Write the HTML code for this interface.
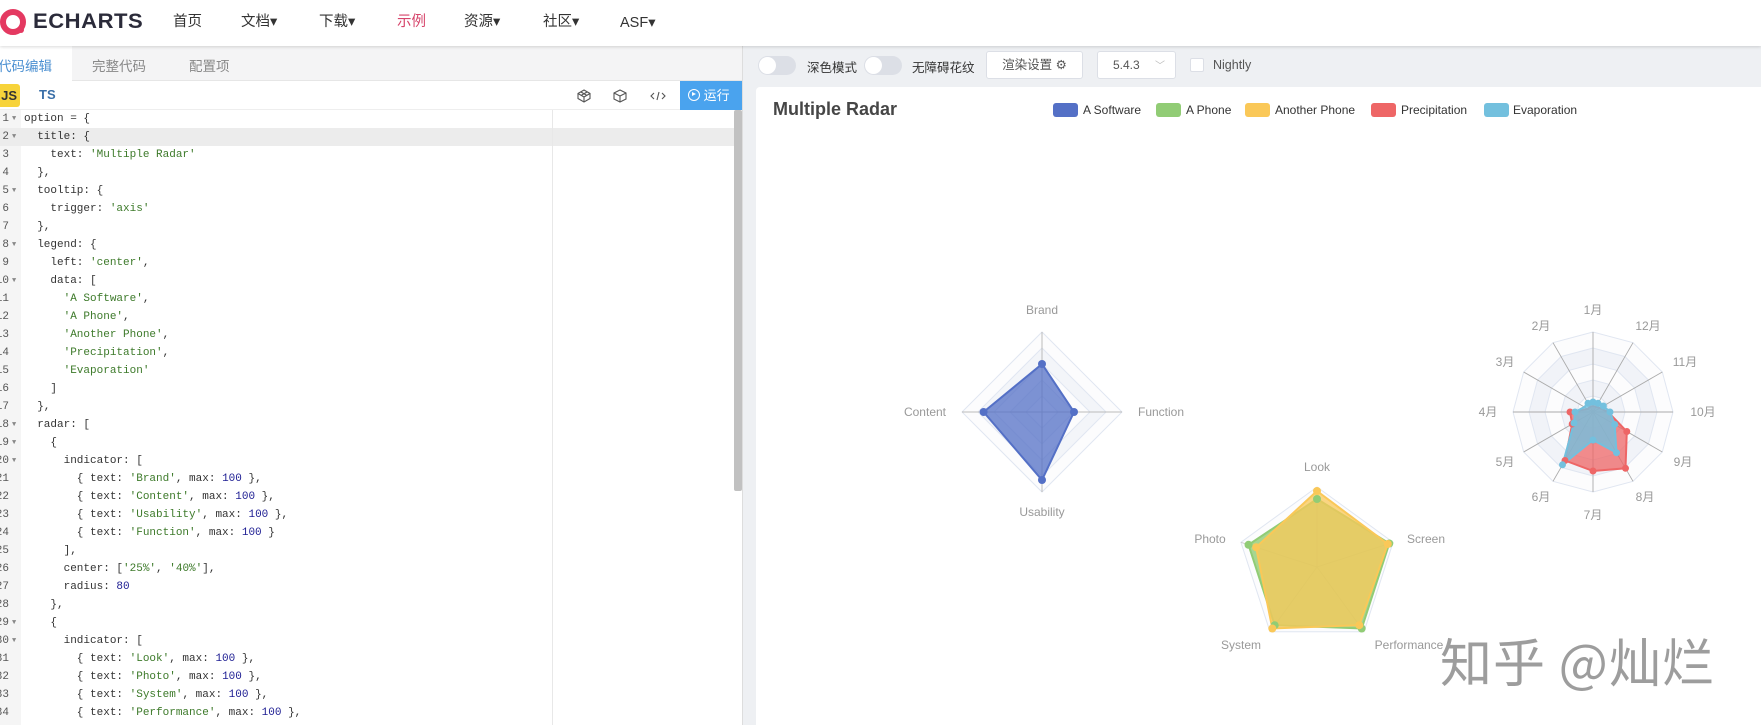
<!DOCTYPE html>
<html><head><meta charset="utf-8">
<style>
*{margin:0;padding:0;box-sizing:border-box}
body{width:1761px;height:725px;overflow:hidden;position:relative;background:#fff;font-family:"Liberation Sans","Noto Sans CJK SC",sans-serif;color:#333}
.a{position:absolute;white-space:nowrap}
.nav{font-size:14.5px;color:#333;top:12px;line-height:20px}
.code{font-family:"Liberation Mono",monospace;font-size:11px;color:#333}
.ln{position:absolute;left:0;width:24px;height:18px;line-height:18px}
.cl{position:absolute;left:24px;height:18px;line-height:18px;white-space:pre}
.s{color:#3d7a2a}.n{color:#1c1c92}
.num{position:absolute;right:15px;color:#555;font-size:11px}
.fold{position:absolute;left:12px;top:0;font-size:7px;color:#888}
.tg{position:absolute;width:38px;height:19px;border-radius:10px;background:#dcdfe6}
.tg::after{content:"";position:absolute;left:1px;top:1px;width:17px;height:17px;border-radius:50%;background:#fff}
</style></head><body>
<!-- nav -->
<div class="a" style="left:0;top:0;width:1761px;height:46px;background:#fff;box-shadow:0 1px 3px rgba(0,0,0,.15);z-index:2">
 <svg class="a" style="left:0;top:8px" width="30" height="30" viewBox="0 0 30 30"><circle cx="13" cy="14" r="10" fill="none" stroke="#e43961" stroke-width="6"/><circle cx="21" cy="22" r="3" fill="#e43961"/></svg>
 <div class="a" style="left:33px;top:10px;font-size:21px;font-weight:bold;color:#2b2b3a;letter-spacing:0.5px;transform:scaleX(1.05);transform-origin:left">ECHARTS</div>
 <div class="a nav" style="left:173px">首页</div>
 <div class="a nav" style="left:241px">文档▾</div>
 <div class="a nav" style="left:319px">下载▾</div>
 <div class="a nav" style="left:397px;color:#d6456b">示例</div>
 <div class="a nav" style="left:464px">资源▾</div>
 <div class="a nav" style="left:543px">社区▾</div>
 <div class="a nav" style="left:620px;top:13px">ASF▾</div>
</div>
<!-- left panel -->
<div class="a" style="left:0;top:46px;width:742px;height:35px;background:#f4f4f5;border-bottom:1px solid #e6e6e6"></div>
<div class="a" style="left:0;top:46px;width:72px;height:35px;background:#fff"></div>
<div class="a" style="left:-2px;top:55px;font-size:13.5px;color:#4a8fd1">代码编辑</div>
<div class="a" style="left:92px;top:55px;font-size:13.5px;color:#888">完整代码</div>
<div class="a" style="left:189px;top:55px;font-size:13.5px;color:#888">配置项</div>
<div class="a" style="left:0;top:81px;width:742px;height:29px;background:#fff;border-bottom:1px solid #eee"></div>
<div class="a" style="left:-4px;top:84px;width:24px;height:23px;background:#f7d33a;border-radius:3px;font-weight:bold;font-size:13px;line-height:23px;text-align:right;padding-right:3px;color:#333">JS</div>
<div class="a" style="left:39px;top:87px;font-weight:bold;font-size:13px;color:#3a6fa8">TS</div>
<svg class="a" style="left:576px;top:88px" width="100" height="16" viewBox="0 0 100 16" fill="none" stroke="#555" stroke-width="1.1">
 <path d="M8 2 L14 5.5 L14 10.5 L8 14 L2 10.5 L2 5.5Z M2 5.5 L8 9 L14 5.5 M8 9 V14 M5 4 L11 7.5 M11 4 L5 7.5"/>
 <path d="M44 2 L50 5 L50 11 L44 14 L38 11 L38 5Z M38 5 L44 8 L50 5 M44 8 V14"/>
 <path d="M78 5 L75 8 L78 11 M86 5 L89 8 L86 11 M83 4 L81 12"/>
</svg>
<div class="a" style="left:680px;top:81px;width:62px;height:29px;background:#4aa3ee;color:#fff;font-size:13px;line-height:29px;padding-left:8px">
 <span style="display:inline-block;width:12px;height:12px;border:1.5px solid #fff;border-radius:50%;vertical-align:-1px;position:relative"><span style="position:absolute;left:3px;top:2px;border-left:4px solid #fff;border-top:2.5px solid transparent;border-bottom:2.5px solid transparent"></span></span> 运行</div>
<!-- editor -->
<div class="a" style="left:0;top:110px;width:742px;height:615px;background:#fff"></div>
<div class="a" style="left:0;top:110px;width:21px;height:615px;background:#f5f5f5"></div>
<div class="a" style="left:0;top:128px;width:734px;height:18px;background:#ececec"></div>
<div class="a" style="left:552px;top:110px;width:1px;height:615px;background:#e8e8e8"></div>
<div class="a" style="left:734px;top:110px;width:8px;height:381px;background:#c1c1c1;border-radius:2px"></div>
<div class="a code" style="left:0;top:110px;width:552px;height:615px">
<div class="ln" style="top:0"><span class="num">1</span><span class="fold">▼</span></div><div class="cl" style="top:0">option = {</div>
<div class="ln" style="top:18px"><span class="num">2</span><span class="fold">▼</span></div><div class="cl" style="top:18px">  title: {</div>
<div class="ln" style="top:36px"><span class="num">3</span></div><div class="cl" style="top:36px">    text: <span class="s">'Multiple Radar'</span></div>
<div class="ln" style="top:54px"><span class="num">4</span></div><div class="cl" style="top:54px">  },</div>
<div class="ln" style="top:72px"><span class="num">5</span><span class="fold">▼</span></div><div class="cl" style="top:72px">  tooltip: {</div>
<div class="ln" style="top:90px"><span class="num">6</span></div><div class="cl" style="top:90px">    trigger: <span class="s">'axis'</span></div>
<div class="ln" style="top:108px"><span class="num">7</span></div><div class="cl" style="top:108px">  },</div>
<div class="ln" style="top:126px"><span class="num">8</span><span class="fold">▼</span></div><div class="cl" style="top:126px">  legend: {</div>
<div class="ln" style="top:144px"><span class="num">9</span></div><div class="cl" style="top:144px">    left: <span class="s">'center'</span>,</div>
<div class="ln" style="top:162px"><span class="num">10</span><span class="fold">▼</span></div><div class="cl" style="top:162px">    data: [</div>
<div class="ln" style="top:180px"><span class="num">11</span></div><div class="cl" style="top:180px">      <span class="s">'A Software'</span>,</div>
<div class="ln" style="top:198px"><span class="num">12</span></div><div class="cl" style="top:198px">      <span class="s">'A Phone'</span>,</div>
<div class="ln" style="top:216px"><span class="num">13</span></div><div class="cl" style="top:216px">      <span class="s">'Another Phone'</span>,</div>
<div class="ln" style="top:234px"><span class="num">14</span></div><div class="cl" style="top:234px">      <span class="s">'Precipitation'</span>,</div>
<div class="ln" style="top:252px"><span class="num">15</span></div><div class="cl" style="top:252px">      <span class="s">'Evaporation'</span></div>
<div class="ln" style="top:270px"><span class="num">16</span></div><div class="cl" style="top:270px">    ]</div>
<div class="ln" style="top:288px"><span class="num">17</span></div><div class="cl" style="top:288px">  },</div>
<div class="ln" style="top:306px"><span class="num">18</span><span class="fold">▼</span></div><div class="cl" style="top:306px">  radar: [</div>
<div class="ln" style="top:324px"><span class="num">19</span><span class="fold">▼</span></div><div class="cl" style="top:324px">    {</div>
<div class="ln" style="top:342px"><span class="num">20</span><span class="fold">▼</span></div><div class="cl" style="top:342px">      indicator: [</div>
<div class="ln" style="top:360px"><span class="num">21</span></div><div class="cl" style="top:360px">        { text: <span class="s">'Brand'</span>, max: <span class="n">100</span> },</div>
<div class="ln" style="top:378px"><span class="num">22</span></div><div class="cl" style="top:378px">        { text: <span class="s">'Content'</span>, max: <span class="n">100</span> },</div>
<div class="ln" style="top:396px"><span class="num">23</span></div><div class="cl" style="top:396px">        { text: <span class="s">'Usability'</span>, max: <span class="n">100</span> },</div>
<div class="ln" style="top:414px"><span class="num">24</span></div><div class="cl" style="top:414px">        { text: <span class="s">'Function'</span>, max: <span class="n">100</span> }</div>
<div class="ln" style="top:432px"><span class="num">25</span></div><div class="cl" style="top:432px">      ],</div>
<div class="ln" style="top:450px"><span class="num">26</span></div><div class="cl" style="top:450px">      center: [<span class="s">'25%'</span>, <span class="s">'40%'</span>],</div>
<div class="ln" style="top:468px"><span class="num">27</span></div><div class="cl" style="top:468px">      radius: <span class="n">80</span></div>
<div class="ln" style="top:486px"><span class="num">28</span></div><div class="cl" style="top:486px">    },</div>
<div class="ln" style="top:504px"><span class="num">29</span><span class="fold">▼</span></div><div class="cl" style="top:504px">    {</div>
<div class="ln" style="top:522px"><span class="num">30</span><span class="fold">▼</span></div><div class="cl" style="top:522px">      indicator: [</div>
<div class="ln" style="top:540px"><span class="num">31</span></div><div class="cl" style="top:540px">        { text: <span class="s">'Look'</span>, max: <span class="n">100</span> },</div>
<div class="ln" style="top:558px"><span class="num">32</span></div><div class="cl" style="top:558px">        { text: <span class="s">'Photo'</span>, max: <span class="n">100</span> },</div>
<div class="ln" style="top:576px"><span class="num">33</span></div><div class="cl" style="top:576px">        { text: <span class="s">'System'</span>, max: <span class="n">100</span> },</div>
<div class="ln" style="top:594px"><span class="num">34</span></div><div class="cl" style="top:594px">        { text: <span class="s">'Performance'</span>, max: <span class="n">100</span> },</div>
</div>
<!-- right panel -->
<div class="a" style="left:742px;top:46px;width:1019px;height:679px;background:#eef0f3;border-left:1px solid #ddd"></div>
<div class="tg" style="left:758px;top:56px"></div>
<div class="a" style="left:807px;top:57px;font-size:12.5px;color:#333">深色模式</div>
<div class="tg" style="left:864px;top:56px"></div>
<div class="a" style="left:912px;top:57px;font-size:12.5px;color:#333">无障碍花纹</div>
<div class="a" style="left:986px;top:51px;width:97px;height:28px;background:#fff;border:1px solid #dcdfe6;border-radius:3px;font-size:12.5px;line-height:26px;text-align:center;color:#555">渲染设置 ⚙</div>
<div class="a" style="left:1097px;top:51px;width:79px;height:28px;background:#fff;border:1px solid #dcdfe6;border-radius:3px;font-size:12px;line-height:26px;padding-left:15px;color:#555">5.4.3 <span style="color:#bbb;margin-left:12px;font-size:10px">﹀</span></div>
<div class="a" style="left:1190px;top:58px;width:14px;height:14px;background:#fff;border:1px solid #dcdfe6;border-radius:2px"></div>
<div class="a" style="left:1213px;top:58px;font-size:12.5px;color:#555">Nightly</div>
<!-- card -->
<div class="a" style="left:756px;top:87px;width:1005px;height:638px;background:#fff;border-radius:4px 0 0 0"></div>
<div class="a" style="left:773px;top:99px;font-size:18px;font-weight:bold;color:#464646">Multiple Radar</div>
<svg class="a" style="left:0;top:0" width="1761" height="725" font-family="Liberation Sans, Noto Sans CJK SC, sans-serif" font-size="12">
 <g font-size="12" fill="#333">
  <rect x="1053" y="103" width="25" height="14" rx="3" fill="#5470c6"/><text x="1083" y="114">A Software</text>
  <rect x="1156" y="103" width="25" height="14" rx="3" fill="#91cc75"/><text x="1186" y="114">A Phone</text>
  <rect x="1245" y="103" width="25" height="14" rx="3" fill="#fac858"/><text x="1275" y="114">Another Phone</text>
  <rect x="1371" y="103" width="25" height="14" rx="3" fill="#ee6666"/><text x="1401" y="114">Precipitation</text>
  <rect x="1484" y="103" width="25" height="14" rx="3" fill="#73c0de"/><text x="1513" y="114">Evaporation</text>
 </g>
 <!-- radar 1 -->
 <g transform="translate(1042,412)">
  <g stroke="#e0e6f1">
   <polygon points="0,-80 -80,0 0,80 80,0" fill="#fcfcfd"/>
   <polygon points="0,-64 -64,0 0,64 64,0" fill="#f3f5f9"/>
   <polygon points="0,-48 -48,0 0,48 48,0" fill="#fcfcfd"/>
   <polygon points="0,-32 -32,0 0,32 32,0" fill="#f3f5f9"/>
   <polygon points="0,-16 -16,0 0,16 16,0" fill="#fcfcfd"/>
  </g>
  <path d="M0 -80V80M-80 0H80" stroke="#bbb"/>
  <polygon points="0,-48 -58.4,0 0,68 32,0" fill="#5470c6" fill-opacity="0.75" stroke="#5470c6" stroke-width="2"/>
  <g fill="#5470c6"><circle cx="0" cy="-48" r="4"/><circle cx="-58.4" cy="0" r="4"/><circle cx="0" cy="68" r="4"/><circle cx="32" cy="0" r="4"/></g>
  <g fill="#999" font-size="12">
   <text x="0" y="-98" text-anchor="middle">Brand</text><text x="0" y="104" text-anchor="middle">Usability</text>
   <text x="-96" y="4" text-anchor="end">Content</text><text x="96" y="4" text-anchor="start">Function</text>
  </g>
 </g>
 <!-- radar 2 -->
 <g transform="translate(1317,567)">
  <polygon points="0,-80 -76.1,-24.7 -47,64.7 47,64.7 76.1,-24.7" fill="#fcfcfd" stroke="#e0e6f1"/>
  <path d="M0 0L0 -80M0 0L-76.1 -24.7M0 0L-47 64.7M0 0L47 64.7M0 0L76.1 -24.7" stroke="#ccc"/>
  <polygon points="0,-68 -68.5,-22.2 -42.3,58.2 44.7,61.5 72.3,-23.5" fill="#91cc75" fill-opacity="0.8" stroke="#91cc75" stroke-width="2"/>
  <polygon points="0,-76 -60.9,-19.8 -44.7,61.5 42.3,58.2 70.8,-23" fill="#fac858" fill-opacity="0.75" stroke="#fac858" stroke-width="2"/>
  <g fill="#91cc75"><circle cx="0" cy="-68" r="4"/><circle cx="-68.5" cy="-22.2" r="4"/><circle cx="-42.3" cy="58.2" r="4"/><circle cx="44.7" cy="61.5" r="4"/><circle cx="72.3" cy="-23.5" r="4"/></g>
  <g fill="#fac858"><circle cx="0" cy="-76" r="4"/><circle cx="-60.9" cy="-19.8" r="4"/><circle cx="-44.7" cy="61.5" r="4"/><circle cx="42.3" cy="58.2" r="4"/><circle cx="70.8" cy="-23" r="4"/></g>
  <g fill="#999" font-size="12" text-anchor="middle">
   <text x="0" y="-96">Look</text><text x="-107" y="-24">Photo</text><text x="109" y="-24">Screen</text>
   <text x="-76" y="82">System</text><text x="92" y="82">Performance</text>
  </g>
 </g>
 <!-- radar 3 -->
 <g transform="translate(1593,412)">
  <g stroke="#e0e6f1">
   <polygon points="0,-80 -40,-69.3 -69.3,-40 -80,0 -69.3,40 -40,69.3 0,80 40,69.3 69.3,40 80,0 69.3,-40 40,-69.3" fill="#fcfcfd"/>
   <polygon points="0,-64 -32,-55.4 -55.4,-32 -64,0 -55.4,32 -32,55.4 0,64 32,55.4 55.4,32 64,0 55.4,-32 32,-55.4" fill="#f1f3f8"/>
   <polygon points="0,-48 -24,-41.6 -41.6,-24 -48,0 -41.6,24 -24,41.6 0,48 24,41.6 41.6,24 48,0 41.6,-24 24,-41.6" fill="#fcfcfd"/>
   <polygon points="0,-32 -16,-27.7 -27.7,-16 -32,0 -27.7,16 -16,27.7 0,32 16,27.7 27.7,16 32,0 27.7,-16 16,-27.7" fill="#f1f3f8"/>
   <polygon points="0,-16 -8,-13.9 -13.9,-8 -16,0 -13.9,8 -8,13.9 0,16 8,13.9 13.9,8 16,0 13.9,-8 8,-13.9" fill="#fcfcfd"/>
  </g>
  <path d="M0 -80V80M-80 0H80M-40 -69.3L40 69.3M40 -69.3L-40 69.3M-69.3 -40L69.3 40M69.3 -40L-69.3 40" stroke="#aaa" stroke-width="0.9"/>
  <polygon points="0,-6 -3,-5.2 -5.2,-3 -23,0 -20.8,12 -28,48.5 0,59 32.5,56.3 33.8,19.5 15,0 7,-4 3,-5.2" fill="#ee6666" fill-opacity="0.75" stroke="#ee6666" stroke-width="2"/>
  <polygon points="0,-10 -5,-8.7 -8.7,-5 -18,0 -19,11 -30.5,52.8 0,28 23.5,40.7 21.7,12.5 17,0 10.4,-6 5,-8.7" fill="#73c0de" fill-opacity="0.8" stroke="#73c0de" stroke-width="2"/>
  <g fill="#ee6666"><circle cx="-23" cy="0" r="3.5"/><circle cx="-20.8" cy="12" r="3.5"/><circle cx="-28" cy="48.5" r="3.5"/><circle cx="0" cy="59" r="3.5"/><circle cx="32.5" cy="56.3" r="3.5"/><circle cx="33.8" cy="19.5" r="3.5"/></g>
  <g fill="#73c0de"><circle cx="0" cy="-10" r="3.5"/><circle cx="-5" cy="-8.7" r="3.5"/><circle cx="-18" cy="0" r="3.5"/><circle cx="-19" cy="11" r="3.5"/><circle cx="-30.5" cy="52.8" r="3.5"/><circle cx="0" cy="28" r="3.5"/><circle cx="23.5" cy="40.7" r="3.5"/><circle cx="21.7" cy="12.5" r="3.5"/><circle cx="17" cy="0" r="3.5"/><circle cx="10.4" cy="-6" r="3.5"/><circle cx="5" cy="-8.7" r="3.5"/></g>
  <g fill="#999" font-size="12" text-anchor="middle">
   <text x="0" y="-98">1月</text><text x="-52" y="-82">2月</text><text x="-88" y="-46">3月</text><text x="-105" y="4">4月</text>
   <text x="-88" y="54">5月</text><text x="-52" y="89">6月</text><text x="0" y="107">7月</text><text x="52" y="89">8月</text>
   <text x="90" y="54">9月</text><text x="110" y="4">10月</text><text x="92" y="-46">11月</text><text x="55" y="-82">12月</text>
  </g>
 </g>
</svg>
<div class="a" style="left:1440px;top:622px;font-size:52px;color:#9d9d9d;font-family:'Noto Sans CJK SC',sans-serif;text-shadow:1px 1px 0 #fff,-1px -1px 0 #fff;letter-spacing:1px">知乎 @灿烂</div>
</body></html>
